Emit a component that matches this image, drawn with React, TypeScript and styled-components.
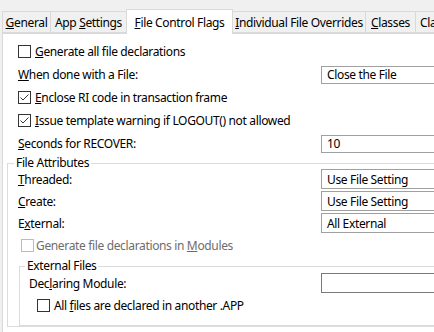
import React from 'react';
import styled, { createGlobalStyle } from 'styled-components';

const GlobalStyle = createGlobalStyle`
  html, body {
    margin: 0;
    padding: 0;
    background: #f0f0f0;
    overflow: hidden;
  }
  body {
    font-family: 'Noto Sans', 'Open Sans', sans-serif;
    font-size: 12px;
    letter-spacing: -0.35px;
    color: #000;
  }
`;

const Window = styled.div`
  width: 434px;
  height: 332px;
  overflow: hidden;
  background: #f0f0f0;
`;

const TabStrip = styled.div`
  display: flex;
  align-items: flex-end;
  height: 34px;
  padding-left: 2px;
  position: relative;
  z-index: 1;
`;

const Tab = styled.div<{ $w: number; $active?: boolean; $start?: boolean }>`
  flex: none;
  box-sizing: border-box;
  width: ${p => p.$w}px;
  height: ${p => (p.$active ? 25 : 22)}px;
  margin-right: -1px;
  margin-bottom: ${p => (p.$active ? 0 : 1)}px;
  border: 1px solid #d9d9d9;
  border-bottom: ${p => (p.$active ? 'none' : '1px solid #d9d9d9')};
  background: ${p => (p.$active ? '#fff' : '#f0f0f0')};
  display: flex;
  align-items: center;
  justify-content: ${p => (p.$start ? 'flex-start' : 'center')};
  padding-left: ${p => (p.$start ? 4 : 0)}px;
  padding-top: ${p => (p.$active ? 0 : 1)}px;
  white-space: nowrap;
  position: relative;
  z-index: ${p => (p.$active ? 2 : 1)};
`;

const Page = styled.div`
  margin-left: 2px;
  margin-top: -1px;
  width: 600px;
  height: 400px;
  background: #fff;
  border: 1px solid #d9d9d9;
  padding-top: 6px;
`;

const Section = styled.div`
  padding-left: 15px;
`;

const Row = styled.div<{ $h?: number; $label?: number }>`
  display: grid;
  grid-template-columns: ${p => p.$label ?? 303}px 160px;
  align-items: center;
  height: ${p => p.$h ?? 23}px;
  white-space: nowrap;
`;

const CheckRow = styled.label<{ $h?: number; $indent?: number; $gap?: number; $disabled?: boolean }>`
  display: flex;
  align-items: center;
  gap: ${p => p.$gap ?? 4}px;
  height: ${p => p.$h ?? 23}px;
  padding-left: ${p => p.$indent ?? 0}px;
  white-space: nowrap;
  color: ${p => (p.$disabled ? '#6d6d6d' : '#000')};
`;

const Field = styled.div<{ $h: number; $dark?: boolean }>`
  box-sizing: border-box;
  height: ${p => p.$h}px;
  border: 1px solid ${p => (p.$dark ? '#7a7a7a' : '#a0a0a0')};
  background: #fff;
  display: flex;
  align-items: center;
  padding-left: 5px;
`;

const Group = styled.fieldset<{ $ml: number; $pl: number }>`
  margin: 0 0 0 ${p => p.$ml}px;
  border: 1px solid #dcdcdc;
  padding: 0 0 0 ${p => p.$pl}px;
  min-width: 0;
`;

const Legend = styled.legend<{ $ml: number }>`
  margin-left: ${p => p.$ml}px;
  padding: 0 2px;
  line-height: 14px;
  height: 14px;
`;

const U = styled.span`
  text-decoration: underline;
  text-underline-offset: 1px;
`;

const Box = ({ checked, disabled }: { checked?: boolean; disabled?: boolean }) => (
  <svg width="13" height="13" viewBox="0 0 13 13" style={{ flex: 'none' }}>
    <rect x="0.5" y="0.5" width="12" height="12" fill="#fff" stroke={disabled ? '#bcbcbc' : '#333'} />
    {checked && <path d="M2.5 6.5 L5 9 L10.5 3.5" fill="none" stroke="#333" strokeWidth="1" />}
  </svg>
);

export default function App() {
  return (
    <Window>
      <GlobalStyle />
      <TabStrip>
        <Tab $w={49}><span><U>G</U>eneral</span></Tab>
        <Tab $w={77}><span>App <U>S</U>ettings</span></Tab>
        <Tab $w={107} $active><span><U>F</U>ile Control Flags</span></Tab>
        <Tab $w={134}><span><U>I</U>ndividual File Overrides</span></Tab>
        <Tab $w={51}><span><U>C</U>lasses</span></Tab>
        <Tab $w={60} $start><span>Class Overrides</span></Tab>
      </TabStrip>
      <Page>
        <Section>
          <CheckRow><Box /><span><U>G</U>enerate all file declarations</span></CheckRow>
          <Row>
            <span><U>W</U>hen done with a File:</span>
            <Field $h={18}>Close the File</Field>
          </Row>
          <CheckRow><Box checked /><span><U>E</U>nclose RI code in transaction frame</span></CheckRow>
          <CheckRow><Box checked /><span><U>I</U>ssue template warning if LOGOUT() not allowed</span></CheckRow>
          <Row>
            <span><U>S</U>econds for RECOVER:</span>
            <Field $h={18}>10</Field>
          </Row>
        </Section>
        <Group $ml={4} $pl={10} style={{ marginTop: 1 }}>
          <Legend $ml={-4}>File Attributes</Legend>
          <Row $h={22} style={{ marginTop: -2 }}>
            <span><U>T</U>hreaded:</span>
            <Field $h={20}>Use File Setting</Field>
          </Row>
          <Row $h={22}>
            <span><U>C</U>reate:</span>
            <Field $h={20}>Use File Setting</Field>
          </Row>
          <Row $h={22}>
            <span>E<U>x</U>ternal:</span>
            <Field $h={20}>All External</Field>
          </Row>
          <CheckRow $h={22} $indent={3} $gap={2} $disabled>
            <Box disabled /><span>Generate file declarations in <U>M</U>odules</span>
          </CheckRow>
          <Group $ml={1} $pl={9} style={{ marginTop: 3, paddingBottom: 9 }}>
            <Legend $ml={-4}>External Files</Legend>
            <Row $h={22} $label={292} style={{ marginTop: -1 }}>
              <span>Dec<U>l</U>aring Module:</span>
              <Field $h={20} $dark />
            </Row>
            <CheckRow $h={22} $indent={8}>
              <Box /><span>All <U>f</U>iles are declared in another .APP</span>
            </CheckRow>
          </Group>
        </Group>
      </Page>
    </Window>
  );
}
